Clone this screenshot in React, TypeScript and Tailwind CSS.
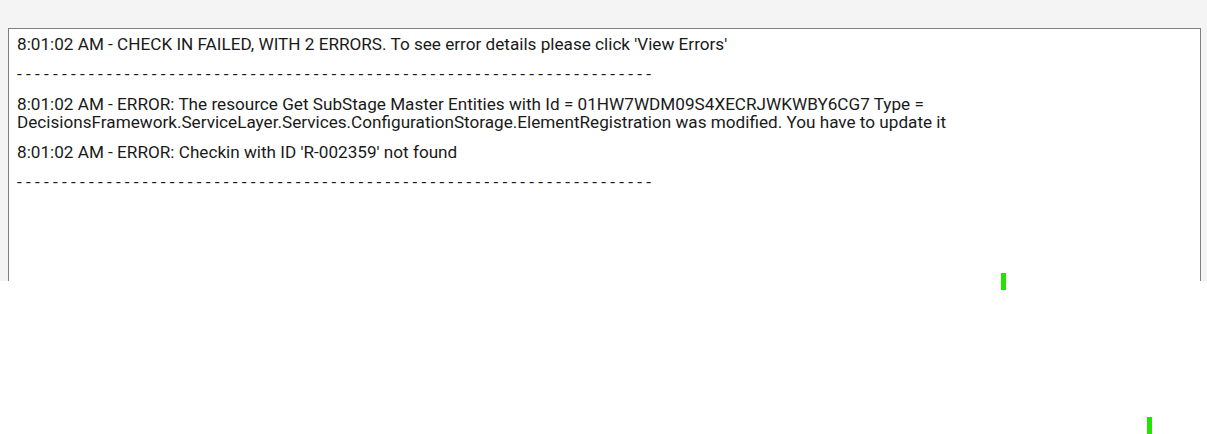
import React from "react";

const dashes = Array(71).fill("-").join(" ");

export default function App() {
  return (
    <div className="relative w-[1207px] h-[434px] bg-white overflow-hidden" style={{ fontFamily: "Roboto, 'Liberation Sans', sans-serif" }}>
      <div className="h-[281px] bg-[#f4f4f4] overflow-hidden pt-[28px] pl-[8px]">
        <div className="w-[1193px] h-[300px] bg-white border border-[#808080] px-[8px] pt-[6px] text-[17.15px] leading-[18px] text-[#1a1a1a]">
          <p className="mb-[12px]">8:01:02 AM - CHECK IN FAILED, WITH 2 ERRORS. To see error details please click 'View Errors'</p>
          <p className="mb-[12px]">{dashes}</p>
          <p className="mb-[12px]">
            8:01:02 AM - ERROR: The resource Get SubStage Master Entities with Id = 01HW7WDM09S4XECRJWKWBY6CG7 Type =<br />
            DecisionsFramework.ServiceLayer.Services.ConfigurationStorage.ElementRegistration was modified. You have to update it
          </p>
          <p className="mb-[12px]">8:01:02 AM - ERROR: Checkin with ID 'R-002359' not found</p>
          <p className="mb-[12px]">{dashes}</p>
        </div>
      </div>
      <div className="absolute left-[1001px] top-[273px] w-[5px] h-[17px] bg-[#22e400]" />
      <div className="absolute left-[1147px] top-[417px] w-[5px] h-[17px] bg-[#22e400]" />
    </div>
  );
}
